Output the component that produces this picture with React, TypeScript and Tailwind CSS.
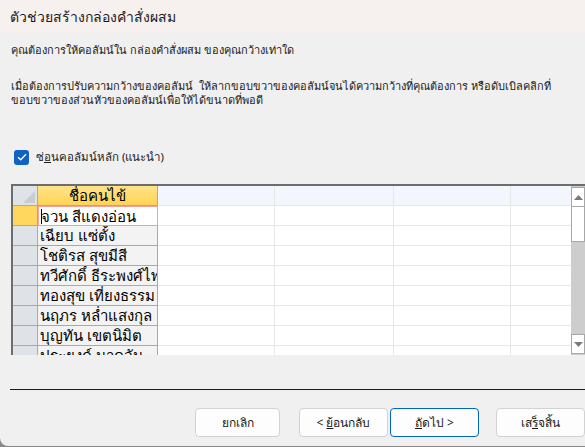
import React from "react";

const font = { fontFamily: '"Noto Sans", "Open Sans", sans-serif' };

function Btn({ children, primary }: { children: React.ReactNode; primary?: boolean }) {
  return (
    <div
      className={
        "w-[89px] h-[29px] rounded-[4px] bg-[#fdfdfd] flex items-center justify-center text-[12px] text-[#1a1a1a] border whitespace-nowrap " +
        (primary ? "border-[#0067c0]" : "border-[#d2d2d2]")
      }
    >
      {children}
    </div>
  );
}

const names = [
  "จวน สีแดงอ่อน",
  "เฉียบ แซ่ตั้ง",
  "โชติรส สุขมีสี",
  "ทวีศักดิ์ ธีระพงศ์ไพ",
  "ทองสุข เที่ยงธรรม",
  "นฤภร หล่ำแสงกุล",
  "บุญทัน เขตนิมิต",
  "ประยงค์ นาคจัน",
];

export default function App() {
  return (
    <div className="w-[585px] h-[447px] bg-[#8a8a8a] overflow-hidden text-black" style={font}>
      <div className="h-[446px] bg-[#f0f0f0] rounded-bl-[8px] flex flex-col overflow-hidden">
        <div className="h-[33px] shrink-0 bg-[#f6f0ee] pl-[10px] flex items-center text-[14px] text-[#1a1a1a]">
          ตัวช่วยสร้างกล่องคำสั่งผสม
        </div>
        <div className="pl-[11px] pt-[10px] text-[11px] leading-[14px] text-[#1a1a1a] whitespace-nowrap">
          <p>คุณต้องการให้คอลัมน์ใน กล่องคำสั่งผสม ของคุณกว้างเท่าใด</p>
          <p className="mt-[22px]">
            เมื่อต้องการปรับความกว้างของคอลัมน์&nbsp; ให้ลากขอบขวาของคอลัมน์จนได้ความกว้างที่คุณต้องการ หรือดับเบิลคลิกที่
          </p>
          <p>ขอบขวาของส่วนหัวของคอลัมน์เพื่อให้ได้ขนาดที่พอดี</p>
        </div>
        <div className="flex items-center pl-[14px] mt-[42px] h-[16px]">
          <div className="w-[15px] h-[15px] rounded-[3px] bg-[#0f62c4] flex items-center justify-center">
            <svg width="10" height="8" viewBox="0 0 10 8">
              <path d="M1 4.2 L3.7 6.8 L9 1.2" stroke="white" strokeWidth="1.3" fill="none" />
            </svg>
          </div>
          <span className="ml-[7px] text-[11.5px] text-[#1a1a1a]">
            ซ่<span className="underline">อ</span>นคอลัมน์หลัก (แนะนำ)
          </span>
        </div>
        {/* grid */}
        <div className="ml-[11px] mt-[19px] h-[171px] shrink-0 border-t-2 border-l-2 border-[#6d6d6d] flex bg-white">
          <div className="flex-1 flex flex-col overflow-hidden">
            {/* header */}
            <div className="flex h-[20px] shrink-0">
              <div className="w-[25px] bg-[#dfe3e8] border-r border-b border-[#a9a9a9] relative">
                <svg className="absolute right-[2px] bottom-[2px]" width="12" height="12" viewBox="0 0 12 12">
                  <path d="M12 0 L12 12 L0 12 Z" fill="#c9cdd2" />
                </svg>
              </div>
              <div className="w-[120px] bg-gradient-to-b from-[#ffe28a] to-[#ffd452] border-r border-b border-[#a9a9a9] flex items-center justify-center text-[15px]">
                ชื่อคนไข้
              </div>
              <div className="w-[117px] bg-[#f4f6fe] border-r border-b border-[#e6e6e6]" />
              <div className="w-[119px] bg-[#f4f6fe] border-r border-b border-[#e6e6e6]" />
              <div className="w-[117px] bg-[#f4f6fe] border-r border-b border-[#e6e6e6]" />
              <div className="flex-1 bg-[#f4f6fe] border-b border-[#e6e6e6]" />
            </div>
            {names.map((n, i) => (
              <div key={i} className="flex h-[20px] shrink-0">
                <div
                  className={
                    "w-[25px] border-r border-b border-[#a9a9a9] " + (i === 0 ? "bg-[#ffd75e]" : "bg-[#dfe3e8]")
                  }
                />
                {i === 0 ? (
                  <div className="w-[120px] bg-white border border-[#f0a0a0] flex items-center text-[15px] pl-[2px] whitespace-nowrap overflow-hidden">
                    <span className="w-px h-[15px] bg-black mr-[-1px]" />
                    {n}
                  </div>
                ) : (
                  <div className="w-[120px] bg-[#f3f3f3] border-r border-b border-[#a9a9a9] flex items-center text-[15px] pl-[2px] whitespace-nowrap overflow-hidden">
                    {n}
                  </div>
                )}
                <div className="w-[117px] border-r border-b border-[#e8e8e8]" />
                <div className="w-[119px] border-r border-b border-[#e8e8e8]" />
                <div className="w-[117px] border-r border-b border-[#e8e8e8]" />
                <div className="flex-1 border-b border-[#e8e8e8]" />
              </div>
            ))}
          </div>
          {/* scrollbar */}
          <div className="w-[14px] bg-[#cdcdcd] flex flex-col pt-[1px] pb-[1px]">
            <div className="h-[20px] bg-white border border-[#a7a7a7] flex items-center justify-center">
              <svg width="9" height="5" viewBox="0 0 9 5">
                <path d="M0 5 L4.5 0 L9 5 Z" fill="#7a7a7a" />
              </svg>
            </div>
            <div className="h-[35px] bg-white border border-[#a7a7a7] border-t-0" />
            <div className="flex-1" />
            <div className="h-[20px] bg-white border border-[#a7a7a7] flex items-center justify-center">
              <svg width="9" height="5" viewBox="0 0 9 5">
                <path d="M0 0 L9 0 L4.5 5 Z" fill="#7a7a7a" />
              </svg>
            </div>
          </div>
        </div>
        <div className="ml-[10px] mt-[34px] h-px shrink-0 bg-[#1a1a1a]" />
        <div className="flex mt-[18px] pl-[195px]">
          <Btn>ยกเลิก</Btn>
          <div className="ml-[19px]">
            <Btn>
              &lt; <span className="underline ml-[3px]">ย้</span>อนกลับ
            </Btn>
          </div>
          <div className="ml-[2px]">
            <Btn primary>
              <span className="underline">ถั</span>ดไป &gt;
            </Btn>
          </div>
          <div className="ml-[17px]">
            <Btn>
              เส<span className="underline">ร็</span>จสิ้น
            </Btn>
          </div>
        </div>
      </div>
    </div>
  );
}
